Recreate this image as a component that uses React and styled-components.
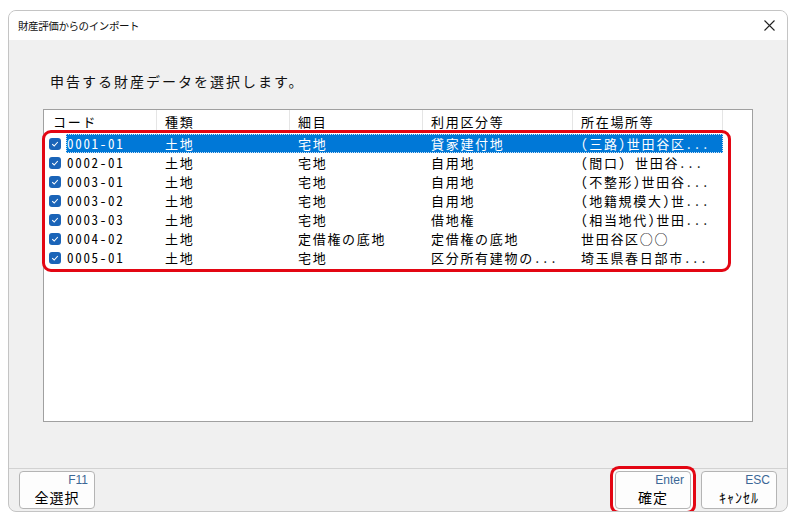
import React from 'react';
import styled, {createGlobalStyle} from 'styled-components';

const GlobalStyle = createGlobalStyle`
    body {
        margin: 0;
        background: #ffffff;
        font-family: "Noto Sans CJK JP", "Noto Sans", sans-serif;
    }
`;

const columns = ['コード', '種類', '細目', '利用区分等', '所在場所等'];

const rows = [
    ['0001-01', '土地', '宅地', '貸家建付地', '(三路)世田谷区...'],
    ['0002-01', '土地', '宅地', '自用地', '(間口) 世田谷...'],
    ['0003-01', '土地', '宅地', '自用地', '(不整形)世田谷...'],
    ['0003-02', '土地', '宅地', '自用地', '(地籍規模大)世...'],
    ['0003-03', '土地', '宅地', '借地権', '(相当地代)世田...'],
    ['0004-02', '土地', '定借権の底地', '定借権の底地', '世田谷区○○'],
    ['0005-01', '土地', '宅地', '区分所有建物の...', '埼玉県春日部市...'],
];

const App = () => {
    return <>
        <GlobalStyle/>
        <Window>
            <TitleBar>
                <TitleText>財産評価からのインポート</TitleText>
                <CloseButton>
                    <svg width="11" height="11" viewBox="0 0 11 11">
                        <path d="M0.5 0.5 L10.5 10.5 M10.5 0.5 L0.5 10.5" stroke="#222" strokeWidth="1.1"/>
                    </svg>
                </CloseButton>
            </TitleBar>
            <Body>
                <Prompt>申告する財産データを選択します。</Prompt>
                <ListBox>
                    <HeaderRow>
                        {columns.map((c, i) => <HeaderCell key={c} first={i === 0}>{c}</HeaderCell>)}
                    </HeaderRow>
                    {rows.map((r, i) => <Row key={r[0]}>
                        <CheckCell>
                            <Check>
                                <svg width="8" height="8" viewBox="0 0 8 8">
                                    <path d="M1.2 4.2 L3.2 6 L6.8 2" fill="none" stroke="#fff" strokeWidth="1.1"/>
                                </svg>
                            </Check>
                        </CheckCell>
                        <RowBody selected={i === 0}>
                            {r.map((v, j) => <Cell key={j} first={j === 0}>{v}</Cell>)}
                        </RowBody>
                    </Row>)}
                    <Highlight/>
                </ListBox>
            </Body>
            <Footer>
                <FnButton>
                    <KeyLabel>F11</KeyLabel>
                    <ButtonLabel>全選択</ButtonLabel>
                </FnButton>
                <Spacer/>
                <FnButton marked>
                    <KeyLabel>Enter</KeyLabel>
                    <ButtonLabel>確定</ButtonLabel>
                </FnButton>
                <FnButton>
                    <KeyLabel>ESC</KeyLabel>
                    <ButtonLabel>ｷｬﾝｾﾙ</ButtonLabel>
                </FnButton>
            </Footer>
        </Window>
    </>
}

const Window = styled.div`
    margin: 10px 0 0 8px;
    width: 780px;
    height: 502px;
    box-sizing: border-box;
    border: 1px solid #c4c4c4;
    border-radius: 8px;
    overflow: hidden;
    display: flex;
    flex-direction: column;
    background: #f0f0f0;
`;

const TitleBar = styled.div`
    height: 29px;
    flex-shrink: 0;
    background: #ffffff;
    display: flex;
    align-items: center;
    justify-content: space-between;
    padding: 0 12px 0 9px;
`;

const TitleText = styled.div`
    font-size: 10.5px;
    color: #111;
    letter-spacing: -0.4px;
`;

const CloseButton = styled.div`
    width: 12px;
    height: 12px;
    display: flex;
    align-items: center;
    justify-content: center;
`;

const Body = styled.div`
    flex: 1;
    padding: 0 34px;
    display: flex;
    flex-direction: column;
`;

const Prompt = styled.div`
    margin: 31px 0 0 7px;
    height: 20px;
    line-height: 20px;
    font-size: 14px;
    letter-spacing: 2px;
    color: #111;
`;

const ListBox = styled.div`
    position: relative;
    margin-top: 18px;
    height: 313px;
    box-sizing: border-box;
    border: 1px solid #a0a0a0;
    background: #ffffff;
`;

const HeaderRow = styled.div`
    display: grid;
    grid-template-columns: 113px 133px 133px 150px 150px;
    height: 24px;
`;

const HeaderCell = styled.div`
    font-size: 13px;
    font-feature-settings: "hwid";
    letter-spacing: 1.7px;
    line-height: 24px;
    padding-left: ${p => p.first ? 9 : 8}px;
    border-right: 1px solid #e5e5e5;
    color: #000;
    white-space: nowrap;
`;

const Row = styled.div`
    display: flex;
    height: 19px;
`;

const CheckCell = styled.div`
    width: 22px;
    display: flex;
    align-items: center;
    padding-left: 5px;
    box-sizing: border-box;
`;

const Check = styled.div`
    width: 12px;
    height: 12px;
    border-radius: 3px;
    background: #1a64b8;
    display: flex;
    align-items: center;
    justify-content: center;
`;

const RowBody = styled.div`
    display: grid;
    grid-template-columns: 91px 133px 133px 150px 150px;
    background: ${p => p.selected ? '#0078d7' : 'transparent'};
    color: ${p => p.selected ? '#ffffff' : '#000000'};
    outline: ${p => p.selected ? '1px dotted #cfe3f7' : 'none'};
    outline-offset: -1px;
`;

const Cell = styled.div`
    font-size: 13px;
    font-feature-settings: "hwid";
    letter-spacing: 1.7px;
    line-height: 19px;
    padding-left: ${p => p.first ? 1 : 8}px;
    white-space: nowrap;
    overflow: hidden;
`;

const Highlight = styled.div`
    position: absolute;
    left: -2px;
    top: 20px;
    width: 689px;
    height: 142px;
    box-sizing: border-box;
    border: 3px solid #e30613;
    border-radius: 9px;
    pointer-events: none;
`;

const Footer = styled.div`
    height: 42px;
    flex-shrink: 0;
    border-top: 1px solid #d2d2d2;
    display: flex;
    align-items: center;
    gap: 10px;
    padding: 0 10px;
`;

const Spacer = styled.div`
    flex: 1;
`;

const FnButton = styled.div`
    width: 76px;
    height: 38px;
    box-sizing: border-box;
    border: 1px solid #b4b4b4;
    border-radius: 4px;
    background: #fdfdfd;
    display: flex;
    flex-direction: column;
    box-shadow: ${p => p.marked ? '0 0 0 2px #fdfdfd, 0 0 0 5px #e30613' : 'none'};
`;

const KeyLabel = styled.div`
    font-family: "Liberation Sans", "DejaVu Sans", sans-serif;
    font-size: 12px;
    color: #3b6796;
    text-align: right;
    padding: 2px 6px 0 0;
    line-height: 13px;
`;

const ButtonLabel = styled.div`
    font-size: 14px;
    letter-spacing: 1px;
    text-align: center;
    line-height: 21px;
    color: #000;
`;

export default App;
